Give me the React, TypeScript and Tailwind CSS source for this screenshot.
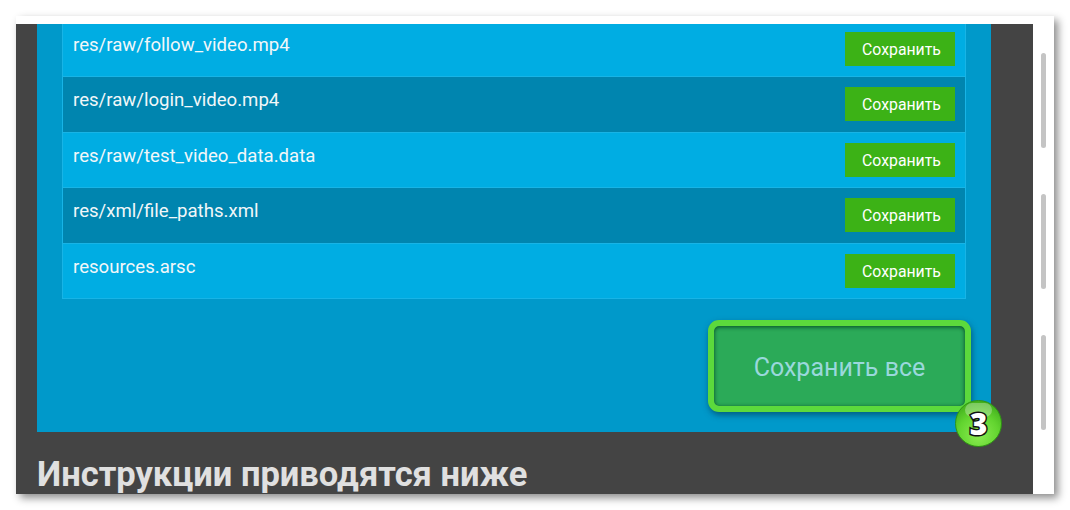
const FILES = [
  { name: 'res/raw/follow_video.mp4', dark: false },
  { name: 'res/raw/login_video.mp4', dark: true },
  { name: 'res/raw/test_video_data.data', dark: false },
  { name: 'res/xml/file_paths.xml', dark: true },
  { name: 'resources.arsc', dark: false },
];

function FileRow({ name, dark }: { name: string; dark: boolean }) {
  return (
    <div className={`flex items-start justify-between h-[55.5px] px-[10px] border-b border-[#18b4e6] ${dark ? 'bg-[#0085af]' : 'bg-[#00ade3]'}`}>
      <span className="text-[18.6px] leading-[24px] mt-[11px] text-[#f2f7f9]">{name}</span>
      <button className="w-[110px] h-[34px] mt-[10px] pl-[3px] pt-[2px] bg-[#3cb216] text-[15.8px] text-white">Сохранить</button>
    </div>
  );
}

export default function App() {
  return (
    <div className="w-[1070px] h-[510px] bg-white pt-4 pl-4 overflow-hidden font-['Roboto',sans-serif]">
      <div className="w-[1038px] h-[478px] flex bg-white shadow-[4px_4px_8px_rgba(0,0,0,0.45)]">
        {/* Page */}
        <div className="w-[1017px] h-full flex flex-col overflow-hidden">
          <div className="h-[8px] shrink-0 bg-white" />
          <div className="flex-1 bg-[#444444] px-[21px] overflow-hidden">
            <div className="relative flow-root w-[954px] h-[408px] bg-[#0099ca] px-[25px]">
              <div className="flex flex-col -mt-[2.5px] border-x border-[#18b4e6]">
                {FILES.map((f) => (
                  <FileRow key={f.name} {...f} />
                ))}
              </div>
              <div className="flex justify-end mt-[21px] -mr-[5px]">
                <button className="w-[263px] h-[92px] pt-[3px] rounded-[11px] border-[6px] border-[#5cd93c] bg-[#2baa58] text-[25px] text-[#9ad8dc] shadow-[1px_3px_6px_rgba(0,50,80,0.6),inset_0_1px_4px_rgba(0,60,30,0.9)]">
                  Сохранить все
                </button>
              </div>
              {/* Step badge */}
              <div className="absolute left-[918px] top-[376px] w-[47px] h-[47px] rounded-full flex items-center justify-center bg-[radial-gradient(circle_at_50%_75%,#8cec52_0%,#62d42f_50%,#2f9a12_100%)] border border-[#2f9612]">
                <div className="absolute left-[9px] top-[2px] w-[27px] h-[14px] rounded-full bg-white/30" />
                <span className="relative font-['Open_Sans',sans-serif] font-extrabold text-[30px] leading-none text-white [-webkit-text-stroke:3px_#111111] [paint-order:stroke_fill]">3</span>
              </div>
            </div>
            <h2 className="mt-[22px] text-[34.5px] leading-[40px] font-bold text-[#e0e0e0] whitespace-nowrap">Инструкции приводятся ниже</h2>
          </div>
        </div>
        {/* Scrollbars */}
        <div className="w-[21px] h-full flex flex-col items-center pt-[37px] gap-[46px]">
          <div className="w-[5px] h-[95px] rounded-full bg-[#c4c4c4]" />
          <div className="w-[5px] h-[95px] rounded-full bg-[#c4c4c4]" />
          <div className="w-[5px] h-[95px] rounded-full bg-[#c4c4c4]" />
        </div>
      </div>
    </div>
  );
}
